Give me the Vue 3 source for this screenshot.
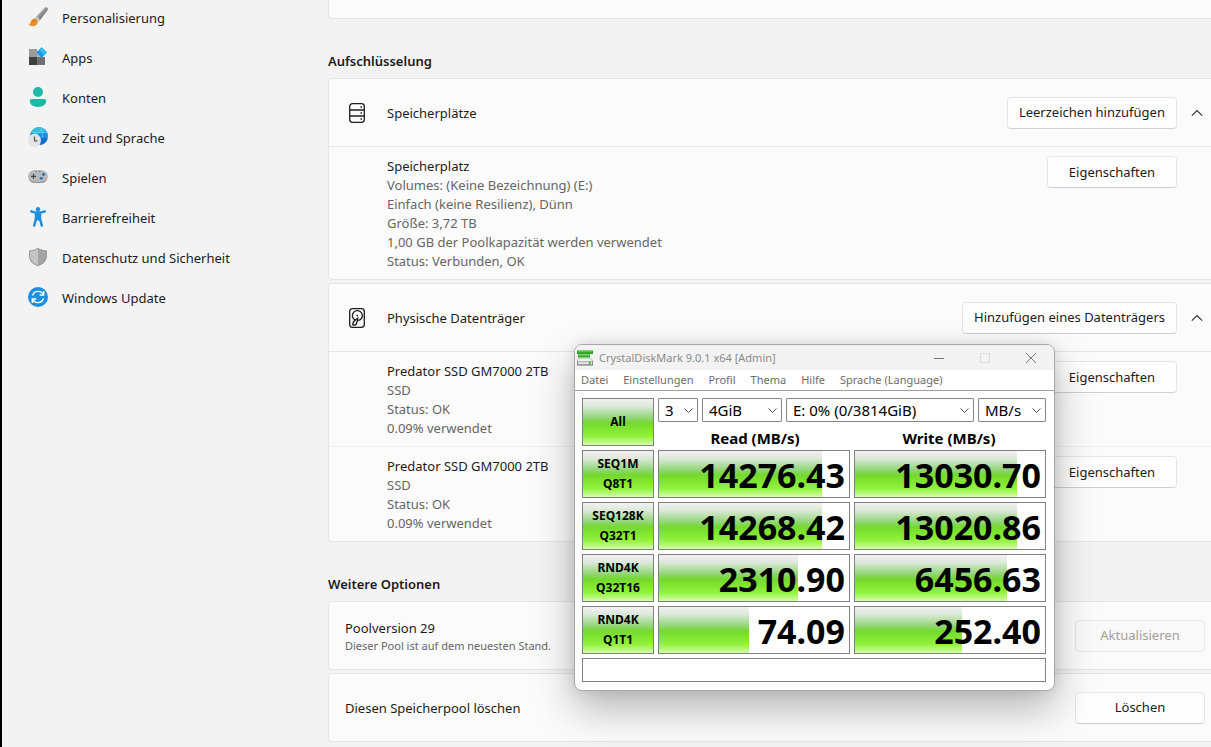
<script setup>
import { ref } from 'vue'

const navItems = [
  { id: 'brush', label: 'Personalisierung' },
  { id: 'apps', label: 'Apps' },
  { id: 'account', label: 'Konten' },
  { id: 'time', label: 'Zeit und Sprache' },
  { id: 'game', label: 'Spielen' },
  { id: 'access', label: 'Barrierefreiheit' },
  { id: 'shield', label: 'Datenschutz und Sicherheit' },
  { id: 'update', label: 'Windows Update' },
]

const spaceDetails = [
  'Volumes: (Keine Bezeichnung) (E:)',
  'Einfach (keine Resilienz), Dünn',
  'Größe: 3,72 TB',
  '1,00 GB der Poolkapazität werden verwendet',
  'Status: Verbunden, OK',
]

const drives = [
  { id: 1, name: 'Predator SSD GM7000 2TB', details: ['SSD', 'Status: OK', '0.09% verwendet'] },
  { id: 2, name: 'Predator SSD GM7000 2TB', details: ['SSD', 'Status: OK', '0.09% verwendet'] },
]

const menus = ['Datei', 'Einstellungen', 'Profil', 'Thema', 'Hilfe', 'Sprache (Language)']

const selects = [
  { id: 'count', label: 'Anzahl', value: '3' },
  { id: 'size', label: 'Testgröße', value: '4GiB' },
  { id: 'drive', label: 'Laufwerk', value: 'E: 0% (0/3814GiB)' },
  { id: 'unit', label: 'Einheit', value: 'MB/s' },
]

const tests = [
  { a: 'SEQ1M', b: 'Q8T1', read: '14276.43', readFill: 86, write: '13030.70', writeFill: 85 },
  { a: 'SEQ128K', b: 'Q32T1', read: '14268.42', readFill: 86, write: '13020.86', writeFill: 85 },
  { a: 'RND4K', b: 'Q32T16', read: '2310.90', readFill: 73, write: '6456.63', writeFill: 80 },
  { a: 'RND4K', b: 'Q1T1', read: '74.09', readFill: 47.5, write: '252.40', writeFill: 56.5 },
]

const comment = ref('')
</script>

<template>
  <div class="screen">
    <nav class="sidebar" aria-label="Einstellungen">
      <a v-for="item in navItems" :key="item.id" href="#" class="nav-item">
        <svg class="nav-icon" viewBox="0 0 20 20" aria-hidden="true">
          <template v-if="item.id === 'brush'">
            <defs>
              <linearGradient id="handle" x1="0" y1="0" x2="1" y2="1">
                <stop offset="0.3" stop-color="#b8b8b8" /><stop offset="0.7" stop-color="#6a6a6a" />
              </linearGradient>
            </defs>
            <path d="M7.500 10.500 16.500.8c.8-.8 2.400-.8 3-.1.6.6.5 1.800 0 2.600L11.600 13.800z" fill="url(#handle)" />
            <path d="M7 11.300 8.800 9.600l3.300 3.100-1.600 2z" fill="#c8c8c8" />
            <path d="M.4 17.300c2.300-.2 1.900-1.500 2.600-3.200.8-2 3-3.100 5.100-2.100 2 1 2.300 3.500 1 5.200-1.900 2.600-6.600 2.600-8.700.1z" fill="#e8912d" />
            <path d="M4.500 15.500c.6-1.800 1.900-2.300 3-2" fill="none" stroke="#b96512" />
          </template>
          <template v-else-if="item.id === 'apps'">
            <path d="M1 2h8v8H1z" fill="#9a9a9a" /><path d="M1 10h8v8H1z" fill="#404040" />
            <path d="M9 10h8v8H9z" fill="#707070" /><path d="M9 4h4v6H9z" fill="#b7b7b7" />
            <path d="m13.600.2 5.400 5.400-5.400 5.400-5.400-5.400z" fill="#199bea" />
            <path d="m13.600.2 5.400 5.400-2.700 2.700-5.400-5.400z" fill="#35b9ee" />
          </template>
          <template v-else-if="item.id === 'account'">
            <circle cx="10" cy="5" r="5" fill="#1eb9a7" />
            <path d="M4 12h12c1.300 0 2.200.9 2.200 2.100 0 3.500-3.500 5.900-8.200 5.900s-8.200-2.400-8.200-5.900C1.800 12.900 2.700 12 4 12z" fill="#1cb8a6" />
          </template>
          <template v-else-if="item.id === 'time'">
            <circle cx="11" cy="9" r="9" fill="#1c8de0" />
            <path d="M3 5.500C6-1.500 15-.500 18 4L8 8z" fill="#35c0dc" />
            <path d="M11 0c5 5 5 13 0 18M3 5.500h16M3 12h16.500" fill="none" stroke="#66cdf0" stroke-width=".7" />
            <path d="M12 11h7.700A9 9 0 0 1 12 18z" fill="#126dca" />
            <circle cx="6.500" cy="13.300" r="6.500" fill="#e4e4e4" />
            <path d="M6.500 9.500v4.300h3" fill="none" stroke="#555" stroke-width="1.200" />
          </template>
          <template v-else-if="item.id === 'game'">
            <rect y="3" width="20" height="13" rx="6.500" fill="#b9b9b9" />
            <path d="M1 12c2 4 16 4 18 0-.8 2.700-2.800 4-5.500 4h-7C3.800 16 1.800 14.700 1 12z" fill="#969696" />
            <path d="M5.500 6.800v5M3 9.300h5" stroke="#444" stroke-width="1.200" />
            <circle cx="15.600" cy="7.500" r="1.400" fill="#0c70c8" /><circle cx="13.300" cy="11.300" r="1.400" fill="#0c70c8" />
            <path d="M7.500 4.500h1.300M11 4.500h1.300" stroke="#2f78b5" />
          </template>
          <template v-else-if="item.id === 'access'">
            <circle cx="10" cy="2.300" r="2.200" fill="#1e8fe0" />
            <path d="M3.300 4.300c2.300 1 4.500 1.300 6.700 1.300s4.400-.3 6.700-1.300M8 6v5.500l-1.800 7M12 6v5.500l1.800 7" fill="none" stroke="#1e8fe0" stroke-width="2.500" stroke-linecap="round" />
            <path d="M7 5.500h6v6l-.6 2h-4.800L7 11.500z" fill="#1e8fe0" />
          </template>
          <template v-else-if="item.id === 'shield'">
            <path d="M10 .8c2.600 1.900 5.500 2.600 8.900 2.600v5.400c0 4.900-3.200 8.300-8.900 10.400C4.300 17.100 1.100 13.700 1.100 8.800V3.400C4.500 3.400 7.400 2.700 10 .8z" fill="#8f8f8f" />
            <path d="M10 1.800c2.300 1.500 4.900 2.300 8 2.400v4.600c0 4.300-2.700 7.400-8 9.500z" fill="#a4a4a4" />
            <path d="M10 1.800C7.700 3.300 5.100 4.100 2 4.200v4.600c0 4.300 2.700 7.400 8 9.500z" fill="#c4c4c4" />
          </template>
          <template v-else>
            <circle cx="10" cy="10" r="10" fill="#1d8fdf" />
            <path d="M4.500 8.500A6 6 0 0 1 15.500 7.500M15.700 4v4h-4M15.500 11.500A6 6 0 0 1 4.500 12.500M4.300 16v-4h4" fill="none" stroke="#fff" stroke-width="1.400" />
          </template>
        </svg>
        <span class="nav-label">{{ item.label }}</span>
      </a>
    </nav>

    <main class="content">
      <section class="card card-tail"></section>

      <h2 class="heading">Aufschlüsselung</h2>
      <div class="cards">
        <section class="card">
          <header class="card-head">
            <svg class="head-icon" viewBox="0 0 20 20" aria-hidden="true">
              <rect x="2.700" y=".7" width="14.600" height="18.600" rx="2.800" />
              <path d="M2.700 7h14.600M2.700 13h14.600" />
              <path d="M13.500 4h1.500M13.500 10h1.500M13.500 16h1.500" class="thick" />
            </svg>
            <h3 class="card-title">Speicherplätze</h3>
            <button type="button" class="btn">Leerzeichen hinzufügen</button>
            <button type="button" class="chevron" aria-label="Speicherplätze einklappen">
              <svg viewBox="0 0 12 12" aria-hidden="true"><path d="m.8 8.700 5.200-5.200 5.200 5.200" /></svg>
            </button>
          </header>
          <div class="row">
            <div class="row-text">
              <p class="name">Speicherplatz</p>
              <p v-for="line in spaceDetails" :key="line">{{ line }}</p>
            </div>
            <button type="button" class="btn">Eigenschaften</button>
          </div>
        </section>

        <section class="card">
          <header class="card-head">
            <svg class="head-icon" viewBox="0 0 20 20" aria-hidden="true">
              <rect x="2.700" y=".7" width="14.600" height="18.600" rx="2.800" />
              <path d="M8.200 12.200a5 5 0 1 1 3 .4" />
              <circle cx="10.200" cy="7.600" r=".9" class="solid" />
              <path d="m10.800 10.300-2.300 1.800M10.800 10.300l-.6 3-1 3.100c-.6 1-2.500.9-3.500.2l.6-2.700 2-1.800z" />
            </svg>
            <h3 class="card-title">Physische Datenträger</h3>
            <button type="button" class="btn">Hinzufügen eines Datenträgers</button>
            <button type="button" class="chevron" aria-label="Physische Datenträger einklappen">
              <svg viewBox="0 0 12 12" aria-hidden="true"><path d="m.8 8.700 5.200-5.200 5.200 5.200" /></svg>
            </button>
          </header>
          <div v-for="drive in drives" :key="drive.id" class="row">
            <div class="row-text">
              <p class="name">{{ drive.name }}</p>
              <p v-for="line in drive.details" :key="line">{{ line }}</p>
            </div>
            <button type="button" class="btn">Eigenschaften</button>
          </div>
        </section>
      </div>

      <h2 class="heading">Weitere Optionen</h2>
      <div class="cards">
        <section class="card option">
          <div class="option-text">
            <h3 class="card-title">Poolversion 29</h3>
            <p class="note">Dieser Pool ist auf dem neuesten Stand.</p>
          </div>
          <button type="button" class="btn" disabled>Aktualisieren</button>
        </section>
        <section class="card option">
          <h3 class="card-title">Diesen Speicherpool löschen</h3>
          <button type="button" class="btn">Löschen</button>
        </section>
      </div>
    </main>

    <div class="window" role="dialog" aria-labelledby="window-title">
      <header class="titlebar">
        <svg class="app-icon" viewBox="0 0 16 16" aria-hidden="true">
          <path d="M2 8h12l2 3v4.500H0V11z" fill="#b5b5b5" />
          <path d="M2.300 8.500h11.400L15 11H1z" fill="#f0f0f0" />
          <path d="M0 11h16v4.500H0z" fill="#8a8a8a" /><path d="M1 11.500h14v2.700H1z" fill="#dedede" />
          <path d="M12 11.500h1.500v2.700H12z" fill="#3fae2a" />
          <path d="M0 .500h16v3.500H0z" fill="#27a01f" /><path d="M1 1.300h14v1H1z" fill="#62d348" />
          <path d="M1 4.500h12v3H1z" fill="#27a01f" /><path d="M2 5.200h10v1H2z" fill="#62d348" />
        </svg>
        <h2 id="window-title" class="window-title">CrystalDiskMark 9.0.1 x64 [Admin]</h2>
        <div class="caption">
          <button type="button" aria-label="Minimieren">
            <svg viewBox="0 0 12 12" aria-hidden="true"><path d="M1 6.500h10" /></svg>
          </button>
          <button type="button" aria-label="Maximieren" disabled>
            <svg viewBox="0 0 12 12" aria-hidden="true"><path d="M1.500 1.500h9v9h-9z" /></svg>
          </button>
          <button type="button" aria-label="Schließen">
            <svg viewBox="0 0 12 12" aria-hidden="true"><path d="m1 1 10 10M11 1 1 11" /></svg>
          </button>
        </div>
      </header>
      <div class="menubar">
        <button v-for="menu in menus" :key="menu" type="button">{{ menu }}</button>
      </div>
      <div class="bench">
        <button type="button" class="test all">All</button>
        <div class="setup">
          <div class="selects">
            <div v-for="s in selects" :key="s.id" class="select-box">
              <select :aria-label="s.label"><option>{{ s.value }}</option></select>
              <svg viewBox="0 0 9 9" aria-hidden="true"><path d="m.5 2.500 4 4 4-4" /></svg>
            </div>
          </div>
          <div class="col-heads">
            <span>Read (MB/s)</span>
            <span>Write (MB/s)</span>
          </div>
        </div>
        <template v-for="t in tests" :key="t.a + t.b">
          <button type="button" class="test"><span>{{ t.a }}</span><span>{{ t.b }}</span></button>
          <div class="score">
            <div class="fill" :style="{ width: t.readFill + '%' }"></div>
            <output class="value">{{ t.read }}</output>
          </div>
          <div class="score">
            <div class="fill" :style="{ width: t.writeFill + '%' }"></div>
            <output class="value">{{ t.write }}</output>
          </div>
        </template>
        <input v-model="comment" class="comment" type="text" aria-label="Kommentar" />
      </div>
    </div>
  </div>
</template>

<style>
body {
  margin: 0;
  background: #f3f3f3;
}
</style>

<style scoped>
.screen {
  position: relative;
  display: flex;
  height: 100vh;
  overflow: hidden;
  box-sizing: border-box;
  border-left: 2px solid #000;
  background: #f3f3f3;
  color: #1b1b1b;
  font-family: "Noto Sans", "Open Sans", sans-serif;
  font-size: 13px;
  line-height: 19px;
}
h2, h3, p {
  margin: 0;
  font-size: inherit;
  font-weight: 400;
}
button, select, input {
  box-sizing: border-box;
  margin: 0;
  padding: 0;
  color: inherit;
  font: inherit;
}
.sidebar {
  flex: 0 0 300px;
  margin-top: -3px;
}
.nav-item {
  display: flex;
  align-items: center;
  gap: 14px;
  height: 40px;
  padding-left: 26px;
  color: inherit;
  text-decoration: none;
}
.nav-icon {
  width: 20px;
  height: 20px;
}
.nav-label,
.card-title {
  padding-top: 2px;
}
.content {
  flex: 1;
  min-width: 0;
  margin-left: 26px;
}
.heading {
  padding: 32px 0 7px;
  font-weight: 600;
  line-height: 20px;
}
.cards {
  display: grid;
  gap: 3px;
}
.card {
  border: 1px solid #e5e5e5;
  border-right: 0;
  border-radius: 4px 0 0 4px;
  background: #fbfbfb;
}
.card-tail {
  height: 18px;
  border-top: 0;
  border-radius: 0 0 0 4px;
}
.card-head {
  display: flex;
  align-items: center;
  height: 67px;
  padding: 0 6px 0 18px;
}
.head-icon {
  width: 20px;
  height: 20px;
  margin-right: 20px;
  fill: none;
  stroke: #1f1f1f;
  stroke-width: 1.3;
}
.head-icon .thick {
  stroke-width: 1.6;
}
.head-icon .solid {
  fill: #1f1f1f;
  stroke: none;
}
.card-title {
  flex: 1;
}
.btn {
  min-width: 130px;
  height: 32px;
  padding: 0 11px;
  border: 1px solid #e5e5e5;
  border-bottom-color: #cfcfcf;
  border-radius: 4px;
  background: #fefefe;
  white-space: nowrap;
}
.btn:disabled {
  border-color: #e8e8e8;
  background: #f9f9f9;
  color: #a0a0a0;
}
.chevron {
  display: grid;
  place-items: center;
  width: 16px;
  height: 32px;
  margin-left: 12px;
  border: 0;
  background: none;
}
.chevron svg {
  width: 12px;
  height: 12px;
  fill: none;
  stroke: #333;
  stroke-width: 1.1;
}
.row {
  display: flex;
  justify-content: space-between;
  align-items: flex-start;
  padding: 9px 34px 8px 58px;
  border-top: 1px solid #e5e5e5;
}
.row + .row {
  border-top-color: #efefef;
}
.row-text {
  padding-top: 1px;
  color: #666;
}
.name {
  color: #1b1b1b;
}
.option {
  display: flex;
  align-items: center;
  height: 67px;
  padding: 0 6px 0 16px;
}
.option-text {
  flex: 1;
}
.note {
  color: #666;
  font-size: 11px;
  line-height: 16px;
}
.window {
  position: absolute;
  top: 344px;
  left: 572px;
  box-sizing: border-box;
  width: 481px;
  border: 1px solid #a8a8a8;
  border-radius: 8px;
  overflow: hidden;
  background: #fff;
  color: #000;
  box-shadow: 0 18px 40px rgba(0, 0, 0, 0.28), 0 0 14px rgba(0, 0, 0, 0.1);
}
.titlebar {
  display: flex;
  align-items: center;
  height: 25px;
  padding-left: 2px;
  background: #f3f3f3;
  color: #8a8a8a;
  font-size: 11px;
}
.app-icon {
  width: 16px;
  height: 16px;
  margin-right: 6px;
}
.window-title {
  flex: 1;
}
.caption {
  display: flex;
}
.caption button {
  display: grid;
  place-items: center;
  width: 46px;
  height: 24px;
  border: 0;
  background: none;
}
.caption svg {
  width: 12px;
  height: 12px;
  fill: none;
  stroke: #777;
}
.caption button:disabled svg {
  stroke: #dcdcdc;
}
.menubar {
  display: flex;
  gap: 15px;
  height: 20px;
  padding-left: 6px;
  border-bottom: 1px solid #a0a0a0;
  color: #6d6d6d;
  font-size: 11px;
}
.menubar button {
  padding-bottom: 2px;
  border: 0;
  background: none;
}
.bench {
  display: grid;
  grid-template-columns: 72px 1fr 1fr;
  grid-template-rows: repeat(5, 48px) 24px;
  gap: 4px;
  padding: 7px 8px 8px 7px;
}
.setup {
  grid-column: span 2;
}
.selects {
  display: grid;
  grid-template-columns: 40px 80px 1fr 68px;
  gap: 4px;
}
.select-box {
  display: grid;
  align-items: center;
}
.select-box > * {
  grid-area: 1 / 1;
}
.select-box select {
  appearance: none;
  width: 100%;
  height: 24px;
  padding-left: 6px;
  border: 1px solid #858585;
  border-radius: 1px;
  background: #fff;
  font-size: 15px;
}
.select-box svg {
  justify-self: end;
  width: 9px;
  height: 9px;
  margin-right: 5px;
  fill: none;
  stroke: #555;
  pointer-events: none;
}
.col-heads {
  display: grid;
  grid-template-columns: 1fr 1fr;
  font-size: 15px;
  font-weight: 700;
  line-height: 32px;
  text-align: center;
}
.test,
.fill {
  background: linear-gradient(#f4f1f4 0%, #dce9d9 16%, #8fd573 42%, #74d92e 52%, #86ea33 72%, #94f341 82%, #d4fbaa 100%);
}
.test {
  display: flex;
  flex-direction: column;
  justify-content: center;
  align-items: center;
  border: 1px solid #808080;
  font-size: 12px;
  font-weight: 700;
  line-height: 20px;
}
.score {
  display: grid;
  grid-template-rows: 46px;
  min-width: 0;
  border: 1px solid #808080;
}
.score > * {
  grid-area: 1 / 1;
}
.value {
  padding-right: 4px;
  font-size: 34px;
  font-weight: 700;
  line-height: 48px;
  text-align: right;
}
.comment {
  grid-column: span 3;
  height: 24px;
  padding: 0 4px;
  border: 1px solid #808080;
  background: #fff;
}
</style>
